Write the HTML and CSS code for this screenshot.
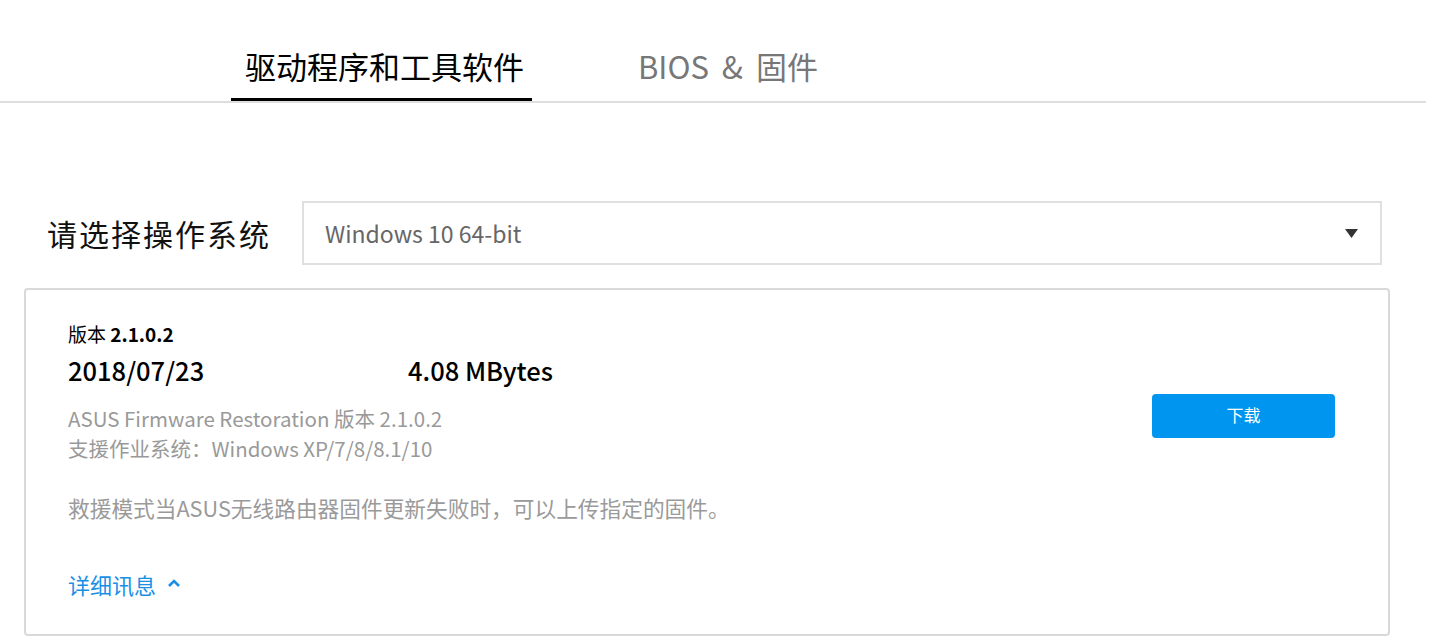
FILE: index.html
```html
<!DOCTYPE html>
<html lang="zh-CN">
<head>
<meta charset="utf-8">
<title>驱动程序和工具软件</title>
<link rel="stylesheet" href="styles.css">
</head>
<body>
<nav class="tabs">
  <a class="tab tab-active">驱动程序和工具软件</a>
  <a class="tab tab-bios">BIOS &amp; 固件</a>
</nav>
<main class="content">
  <div class="os-row">
    <label class="os-label">请选择操作系统</label>
    <div class="select">
      <span class="select-value">Windows 10 64-bit</span>
      <svg class="select-arrow" width="13" height="9" viewBox="0 0 13 9"><path d="M0 0H13L6.5 9Z" fill="#333"/></svg>
    </div>
  </div>
  <section class="card">
    <div class="card-main">
      <div class="version">版本 <b>2.1.0.2</b></div>
      <div class="meta">
        <span class="date">2018/07/23</span>
        <span class="size">4.08 MBytes</span>
      </div>
      <div class="desc-lines">
        <div>ASUS Firmware Restoration 版本 2.1.0.2</div>
        <div>支援作业系统：Windows XP/7/8/8.1/10</div>
      </div>
      <p class="desc">救援模式当ASUS无线路由器固件更新失败时，可以上传指定的固件。</p>
      <a class="more">详细讯息 <svg class="chev" width="14" height="10" viewBox="0 0 14 10"><path d="M2 8L7 3L12 8" fill="none" stroke="#1a8fe6" stroke-width="2.6"/></svg></a>
    </div>
    <button class="download">下载</button>
  </section>
</main>
</body>
</html>
```

FILE: styles.css
```css
* { box-sizing: border-box; }
body {
  margin: 0;
  background: #fff;
  font-family: "Noto Sans CJK SC", "Noto Sans", sans-serif;
  color: #000;
}
.tabs {
  display: flex;
  width: 1426px;
  height: 103px;
  padding-left: 231px;
  border-bottom: 2px solid #dedede;
}
.tab {
  display: block;
  height: 101px;
  padding: 44px 8px 0 14px;
  font-size: 31px;
  line-height: 44px;
  color: #777;
}
.tab-active {
  color: #000;
  border-bottom: 3px solid #000;
  margin-right: 92px;
}
.tab-bios { word-spacing: 6px; }
.content {
  width: 1366px;
  margin-left: 24px;
  padding-top: 98px;
}
.os-row {
  display: flex;
  align-items: center;
}
.os-label {
  width: 278px;
  padding-left: 23px;
  font-size: 30px;
  letter-spacing: 2px;
  color: #111;
}
.select {
  display: flex;
  align-items: center;
  justify-content: space-between;
  width: 1080px;
  height: 64px;
  border: 2px solid #e0e0e0;
  padding: 0 22px 0 21px;
}
.select-value {
  font-size: 23px;
  color: #666;
}
.card {
  display: flex;
  margin-top: 23px;
  border: 2px solid #d9d9d9;
  border-radius: 4px;
  padding: 33px 53px 35px 42px;
}
.card-main { flex: 1; }
.version {
  font-size: 19px;
  line-height: 22px;
}
.version b { font-weight: 700; }
.meta {
  display: flex;
  font-size: 25.5px;
  font-weight: 500;
  line-height: 32px;
  margin-top: 9px;
}
.date { width: 340px; }
.desc-lines {
  margin-top: 17px;
  font-size: 20.5px;
  line-height: 30px;
  color: #999;
}
.desc {
  margin: 30px 0 0;
  font-size: 21.7px;
  line-height: 30px;
  color: #9a9a9a;
}
.more {
  display: flex;
  align-items: center;
  gap: 11px;
  margin-top: 46px;
  font-size: 22px;
  line-height: 30px;
  color: #1a8fe6;
}
.chev { margin-top: -2px; }
.download {
  align-self: flex-start;
  margin-top: 71px;
  width: 183px;
  height: 44px;
  padding: 0 0 3px;
  border: 0;
  border-radius: 4px;
  background: #0096f0;
  color: #fff;
  font-size: 17px;
  font-family: "Noto Sans CJK SC", sans-serif;
}
```
